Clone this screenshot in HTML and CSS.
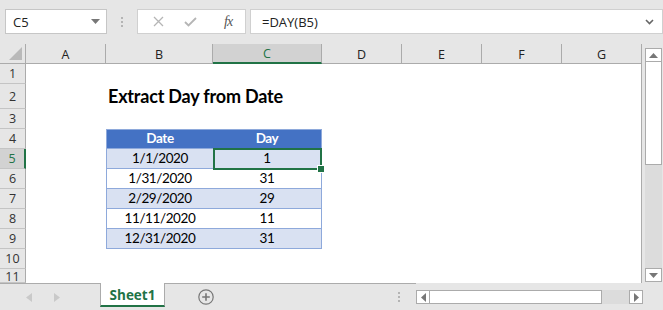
FILE: index.html
```html
<!DOCTYPE html>
<html>
<head>
<meta charset="utf-8">
<link rel="stylesheet" href="styles.css">
</head>
<body>
<div class="app">
  <div class="toolbar">
    <div class="namebox">
      <span>C5</span>
      <svg class="caret" width="9" height="5" viewBox="0 0 9 5"><path d="M0 0h9L4.5 5z" fill="#777"/></svg>
    </div>
    <div class="grip"><i></i><i></i><i></i></div>
    <div class="fbtns">
      <svg class="ico-x" width="11" height="11" viewBox="0 0 11 11"><path d="M1 1l9 9M10 1l-9 9" stroke="#b5b5b5" stroke-width="1.3" fill="none"/></svg>
      <svg class="ico-check" width="13" height="10" viewBox="0 0 13 10"><path d="M1 5l3.5 3.5L12 1" stroke="#b5b5b5" stroke-width="1.8" fill="none"/></svg>
      <span class="fx">fx</span>
    </div>
    <div class="formula">
      <span>=DAY(B5)</span>
      <svg class="chev" width="9" height="6" viewBox="0 0 9 6"><path d="M1 1l3.5 3.5L8 1" stroke="#666" stroke-width="1.6" fill="none"/></svg>
    </div>
  </div>

  <div class="main">
    <div class="sheet">
      <div class="corner"><svg width="13" height="13" viewBox="0 0 13 13"><path d="M13 0V13H0z" fill="#b9b9b9"/></svg></div>
      <div class="ch">A</div><div class="ch">B</div><div class="ch sel">C</div><div class="ch">D</div><div class="ch">E</div><div class="ch">F</div><div class="ch">G</div>

      <div class="rh">1</div><div class="c"></div><div class="c"></div><div class="c"></div><div class="c"></div><div class="c"></div><div class="c"></div><div class="c"></div>

      <div class="rh">2</div><div class="c"></div><div class="c title">Extract Day from Date</div><div class="c"></div><div class="c"></div><div class="c"></div><div class="c"></div><div class="c"></div>

      <div class="rh">3</div><div class="c"></div><div class="c"></div><div class="c"></div><div class="c"></div><div class="c"></div><div class="c"></div><div class="c"></div>

      <div class="rh">4</div><div class="c"></div><div class="c t th tl">Date</div><div class="c t th tr">Day</div><div class="c"></div><div class="c"></div><div class="c"></div><div class="c"></div>

      <div class="rh sel">5</div><div class="c"></div><div class="c t band tl">1/1/2020</div><div class="c t band tr active">1</div><div class="c"></div><div class="c"></div><div class="c"></div><div class="c"></div>

      <div class="rh">6</div><div class="c"></div><div class="c t tl">1/31/2020</div><div class="c t tr">31</div><div class="c"></div><div class="c"></div><div class="c"></div><div class="c"></div>

      <div class="rh">7</div><div class="c"></div><div class="c t band tl">2/29/2020</div><div class="c t band tr">29</div><div class="c"></div><div class="c"></div><div class="c"></div><div class="c"></div>

      <div class="rh">8</div><div class="c"></div><div class="c t tl">11/11/2020</div><div class="c t tr">11</div><div class="c"></div><div class="c"></div><div class="c"></div><div class="c"></div>

      <div class="rh">9</div><div class="c"></div><div class="c t band tl">12/31/2020</div><div class="c t band tr">31</div><div class="c"></div><div class="c"></div><div class="c"></div><div class="c"></div>

      <div class="rh">10</div><div class="c"></div><div class="c"></div><div class="c"></div><div class="c"></div><div class="c"></div><div class="c"></div><div class="c"></div>

      <div class="rh last">11</div><div class="c"></div><div class="c"></div><div class="c"></div><div class="c"></div><div class="c"></div><div class="c"></div><div class="c"></div>
    </div>
    <div class="vscroll">
      <div class="vbar">
        <div class="sbtn"><svg width="9" height="5" viewBox="0 0 9 5"><path d="M0 5h9L4.5 0z" fill="#777"/></svg></div>
        <div class="vthumb"></div>
        <div class="vtrack"></div>
        <div class="sbtn"><svg width="9" height="5" viewBox="0 0 9 5"><path d="M0 0h9L4.5 5z" fill="#777"/></svg></div>
      </div>
    </div>
  </div>

  <div class="tabs">
    <div class="navs">
      <svg width="6" height="9" viewBox="0 0 6 9"><path d="M6 0v9L0 4.5z" fill="#c9c9c9"/></svg>
      <svg width="6" height="9" viewBox="0 0 6 9"><path d="M0 0v9l6-4.5z" fill="#c9c9c9"/></svg>
    </div>
    <div class="tab">Sheet1</div>
    <div class="addwrap">
      <svg width="16" height="16" viewBox="0 0 16 16"><circle cx="8" cy="8" r="7.2" fill="none" stroke="#777" stroke-width="1.2"/><path d="M8 4.2v7.6M4.2 8h7.6" stroke="#777" stroke-width="1.6"/></svg>
    </div>
    <div class="grip2"><i></i><i></i><i></i></div>
    <div class="hbar">
      <div class="hbtn"><svg width="5" height="9" viewBox="0 0 5 9"><path d="M5 0v9L0 4.5z" fill="#777"/></svg></div>
      <div class="hthumb"></div>
      <div class="htrack"></div>
      <div class="hbtn"><svg width="5" height="9" viewBox="0 0 5 9"><path d="M0 0v9l5-4.5z" fill="#777"/></svg></div>
    </div>
    <div class="hend"></div>
  </div>
</div>
</body>
</html>
```

FILE: styles.css
```css
* { box-sizing: border-box; }
html, body { margin: 0; padding: 0; }
body {
  width: 663px;
  height: 310px;
  overflow: hidden;
  background: #e6e6e6;
  font-family: "Open Sans", "Noto Sans", sans-serif;
}
.app {
  width: 663px;
  height: 310px;
  display: flex;
  flex-direction: column;
}

/* toolbar */
.toolbar {
  height: 44px;
  flex: none;
  display: flex;
  align-items: flex-start;
  padding: 9px 0 0 5px;
}
.namebox {
  width: 102px;
  height: 25px;
  background: #fff;
  border: 1px solid #c6c6c6;
  display: flex;
  align-items: center;
  justify-content: space-between;
  padding: 0 6px 0 7px;
  font-size: 13px;
  color: #222;
}
.grip {
  width: 30px;
  height: 25px;
  display: flex;
  flex-direction: column;
  align-items: center;
  justify-content: center;
  gap: 2px;
}
.grip i, .grip2 i {
  display: block;
  width: 2px;
  height: 2px;
  background: #b4b4b4;
}
.fbtns {
  width: 109px;
  height: 25px;
  background: #fff;
  border: 1px solid #d0d0d0;
  display: flex;
  align-items: center;
  padding-left: 15px;
}
.ico-x { margin-right: 20px; }
.ico-check { margin-right: 27px; }
.fx {
  font-family: "Liberation Serif", serif;
  font-style: italic;
  font-size: 14px;
  color: #555;
  letter-spacing: -1px;
}
.formula {
  margin-left: 4px;
  width: 413px;
  height: 25px;
  background: #fff;
  border: 1px solid #d0d0d0;
  display: flex;
  align-items: center;
  justify-content: space-between;
  padding: 0 8px 0 11px;
  font-size: 13px;
  color: #222;
}

/* sheet */
.main {
  height: 239px;
  flex: none;
  display: flex;
}
.sheet {
  width: 642px;
  height: 239px;
  display: grid;
  grid-template-columns: 26px 80px 107px 109px 80px 80px 80px 80px;
  grid-template-rows: 20px 20px 25px repeat(8, 20px) 14px;
  background: #fff;
  border-right: 1px solid #ababab;
  overflow: hidden;
}
.corner {
  background: #e6e6e6;
  border-right: 1px solid #ababab;
  border-bottom: 1px solid #ababab;
  display: flex;
  align-items: flex-end;
  justify-content: flex-end;
  padding: 0 3px 3px 0;
}
.ch {
  background: #e6e6e6;
  border-bottom: 1px solid #ababab;
  border-right: 1px solid #ababab;
  display: flex;
  align-items: center;
  justify-content: center;
  font-size: 12.5px;
  color: #222;
  padding-top: 1px;
}
.ch.sel {
  background: #d2d2d2;
  border-bottom: 2px solid #217346;
  color: #217346;
}
.rh {
  background: #e6e6e6;
  border-right: 1px solid #ababab;
  border-bottom: 1px solid #c4c4c4;
  display: flex;
  align-items: center;
  justify-content: center;
  font-size: 12.5px;
  color: #333;
  overflow: hidden;
}
.rh.sel {
  background: #d2d2d2;
  border-right: 2px solid #217346;
  color: #217346;
}
.rh.last {
  align-items: flex-start;
  line-height: 16px;
}
.c {
  background: #fff;
  font-family: "Lato", "Carlito", sans-serif;
  font-size: 13.5px;
  letter-spacing: -0.4px;
  color: #000;
  display: flex;
  align-items: flex-end;
  padding-bottom: 2px;
  white-space: nowrap;
}
.title {
  position: relative;
  z-index: 1;
  font-weight: bold;
  font-size: 18px;
  letter-spacing: -0.2px;
  padding-left: 2px;
  padding-bottom: 2px;
  overflow: visible;
}
.t {
  justify-content: center;
  border-bottom: 1px solid #8ea9db;
}
.tl { border-left: 1px solid #8ea9db; }
.tr { border-right: 1px solid #8ea9db; }
.th {
  background: #4472c4;
  color: #fff;
  font-weight: bold;
  border-top: 1px solid #8ea9db;
}
.band { background: #d9e1f2; }
.active { position: relative; }
.active::before {
  content: "";
  position: absolute;
  left: 0;
  top: -1px;
  right: -1px;
  bottom: -2px;
  border: 2px solid #217346;
}
.active::after {
  content: "";
  position: absolute;
  right: -4px;
  bottom: -5px;
  width: 6px;
  height: 6px;
  background: #217346;
  border: 1px solid #fff;
}

/* vertical scroll */
.vscroll {
  width: 21px;
  padding: 4px 1px 1px 3px;
  background: #e6e6e6;
}
.vbar {
  height: 234px;
  display: flex;
  flex-direction: column;
  background: #dcdcdc;
}
.sbtn {
  height: 14px;
  flex: none;
  background: #fff;
  border: 1px solid #ababab;
  display: flex;
  align-items: center;
  justify-content: center;
}
.vthumb {
  height: 103px;
  flex: none;
  background: #fff;
  border: 1px solid #ababab;
  border-top: none;
}
.vtrack { flex: 1; }

/* tabs */
.tabs {
  height: 27px;
  flex: none;
  display: flex;
  align-items: flex-start;
  background: #e6e6e6;
}
.navs {
  width: 100px;
  height: 27px;
  border-top: 1px solid #ababab;
  display: flex;
  align-items: center;
  padding: 0 0 0 26px;
  gap: 22px;
}
.tab {
  width: 65px;
  height: 24px;
  background: #fff;
  border-left: 1px solid #ababab;
  border-right: 1px solid #ababab;
  border-bottom: 2px solid #217346;
  display: flex;
  align-items: center;
  justify-content: center;
  font-weight: bold;
  font-size: 13.5px;
  color: #217346;
  padding-top: 1px;
}
.addwrap {
  width: 85px;
  height: 27px;
  border-top: 1px solid #ababab;
  display: flex;
  align-items: center;
  padding-left: 33px;
}
.grip2 {
  width: 166px;
  height: 27px;
  border-top: 1px solid #ababab;
  display: flex;
  flex-direction: column;
  align-items: flex-end;
  justify-content: center;
  gap: 2px;
  padding-right: 16px;
}
.hbar {
  width: 227px;
  height: 14px;
  margin-top: 7px;
  display: flex;
  background: #dcdcdc;
  flex: none;
}
.hend {
  flex: 1;
  height: 1px;
}
.hbtn {
  width: 14px;
  flex: none;
  background: #fff;
  border: 1px solid #ababab;
  display: flex;
  align-items: center;
  justify-content: center;
}
.hthumb {
  width: 172px;
  flex: none;
  background: #fff;
  border: 1px solid #ababab;
  border-left: none;
}
.htrack { flex: 1; }
```
